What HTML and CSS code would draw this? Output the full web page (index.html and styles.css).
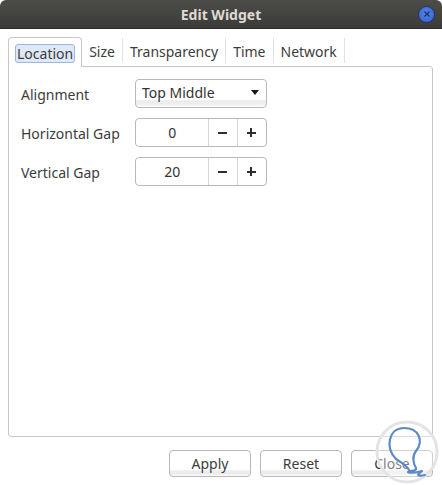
FILE: index.html
```html
<!DOCTYPE html>
<html lang="en">
<head>
  <meta charset="UTF-8">
  <title>Edit Widget</title>
  <link rel="stylesheet" href="styles.css">
</head>
<body>
  <div class="window">
    <div class="titlebar">
      <span></span>
      <span class="title">Edit Widget</span>
      <span class="close-btn">
        <svg width="8" height="8" viewBox="0 0 8 8"><path d="M1.5 1.5 L6.5 6.5 M6.5 1.5 L1.5 6.5" stroke="#1d2f5c" stroke-width="1.3"/></svg>
      </span>
    </div>

    <div class="content">
      <div class="tabs">
        <div class="tab active"><span class="tab-label">Location</span></div>
        <div class="tab">Size</div>
        <div class="tab">Transparency</div>
        <div class="tab">Time</div>
        <div class="tab">Network</div>
      </div>

      <div class="panel">
        <div class="form">
          <label>Alignment</label>
          <div class="combo">
            <span>Top Middle</span>
            <span class="arrow"></span>
          </div>

          <label>Horizontal Gap</label>
          <div class="spin">
            <span class="spin-value">0</span>
            <span class="spin-btn minus"></span>
            <span class="spin-btn plus"></span>
          </div>

          <label>Vertical Gap</label>
          <div class="spin">
            <span class="spin-value">20</span>
            <span class="spin-btn minus"></span>
            <span class="spin-btn plus"></span>
          </div>
        </div>
      </div>

      <div class="actions">
        <button>Apply</button>
        <button>Reset</button>
        <button>Close</button>
      </div>
    </div>

    <svg class="watermark" width="80" height="70" viewBox="0 0 80 70">
      <circle cx="37" cy="33" r="30" fill="rgba(255,255,255,0.35)" stroke="#e4e4e4" stroke-width="3"/>
      <path d="M26 40 C15 30 18 9 34 9 C49 9 54 22 46 32 C42 37 43 44 46 49 C47 53 39 51 38 53 C41 55 48 53 52 52 C48 55 45 58 55 56"
            fill="none" stroke="#5b8ac6" stroke-width="2.2" stroke-linecap="round" stroke-linejoin="round"/>
      <path d="M26 40 C32 44 37 47 39 51" fill="none" stroke="#5b8ac6" stroke-width="2.2" stroke-linecap="round"/>
    </svg>
  </div>
</body>
</html>
```

FILE: styles.css
```css
* { margin: 0; padding: 0; box-sizing: border-box; }
body {
  font-family: 'Noto Sans', 'Open Sans', sans-serif;
  font-size: 14px;
  color: #3c3c3c;
  background: #ffffff;
}
.window {
  position: relative;
  width: 442px;
  height: 485px;
  overflow: hidden;
  background: #ffffff;
}
.titlebar {
  height: 29px;
  display: grid;
  grid-template-columns: 1fr auto 1fr;
  align-items: center;
  background: linear-gradient(#4c4c49, #3b3b39);
  border-radius: 6px 6px 0 0;
  border-bottom: 1px solid #2c2c2b;
}
.title {
  color: #dfdbd2;
  font-weight: bold;
  font-size: 14px;
}
.close-btn {
  justify-self: end;
  margin-right: 7px;
  width: 17px;
  height: 17px;
  border-radius: 50%;
  background: radial-gradient(circle at 50% 40%, #5585ec, #3360d0);
  border: 1px solid #23346a;
  display: flex;
  align-items: center;
  justify-content: center;
}
.content {
  padding: 8px 9px 0 8px;
}
.tabs {
  display: flex;
  height: 29px;
  align-items: stretch;
}
.tab {
  display: flex;
  align-items: center;
  padding: 1px 7px 0;
  border-right: 1px solid #e2e2e2;
  margin: 1px 0 3px;
}
.tab.active {
  margin: 0 0 -1px;
  padding: 1px 6px 0;
  border: 1px solid #c8c8c8;
  border-bottom: none;
  border-radius: 4px 4px 0 0;
  background: #ffffff;
  position: relative;
  z-index: 1;
}
.tab-label {
  padding: 0 1px;
  line-height: 17px;
  background: #dfe8f7;
  border: 1px solid #9ab6e4;
  border-radius: 3px;
}
.panel {
  height: 371px;
  border: 1px solid #c8c8c8;
  border-radius: 0 3px 3px 3px;
  padding: 12px 12px;
}
.form {
  display: grid;
  grid-template-columns: 114px 132px;
  grid-auto-rows: 29px;
  row-gap: 10px;
  align-items: center;
}
.form label {
  padding-top: 2px;
}
.combo {
  height: 29px;
  border: 1px solid #b8b8b5;
  border-radius: 4px;
  background: linear-gradient(#ffffff 0, #ffffff 72%, #ededed 76%, #ededed 88%, #ffffff 100%);
  display: flex;
  align-items: center;
  justify-content: space-between;
  padding: 0 7px 2px 6px;
  color: #333;
}
.arrow {
  width: 0;
  height: 0;
  border-left: 4px solid transparent;
  border-right: 4px solid transparent;
  border-top: 5px solid #1a1a1a;
}
.spin {
  height: 29px;
  border: 1px solid #b8b8b5;
  border-radius: 4px;
  display: flex;
  background: #ffffff;
}
.spin-value {
  width: 73px;
  display: flex;
  align-items: center;
  justify-content: center;
  color: #333;
}
.spin-btn {
  width: 29px;
  border-left: 1px solid #d6d6d6;
  position: relative;
}
.spin-btn::before,
.spin-btn::after {
  content: "";
  position: absolute;
  left: 50%;
  top: 50%;
  background: #2e2e2e;
}
.spin-btn::before {
  width: 9px;
  height: 2px;
  margin: -1px 0 0 -5px;
}
.plus::after {
  width: 2px;
  height: 9px;
  margin: -5px 0 0 -2px;
}
.actions {
  display: flex;
  justify-content: flex-end;
  gap: 9px;
  margin-top: 13px;
}
button {
  width: 82px;
  height: 27px;
  font-family: inherit;
  font-size: 14px;
  color: #3c3c3c;
  border: 1px solid #b8b8b5;
  border-radius: 4px;
  background: linear-gradient(#ffffff 0, #ffffff 74%, #ececec 80%, #ececec 92%, #ffffff 100%);
}
.watermark {
  position: absolute;
  left: 370px;
  top: 419px;
}
```
